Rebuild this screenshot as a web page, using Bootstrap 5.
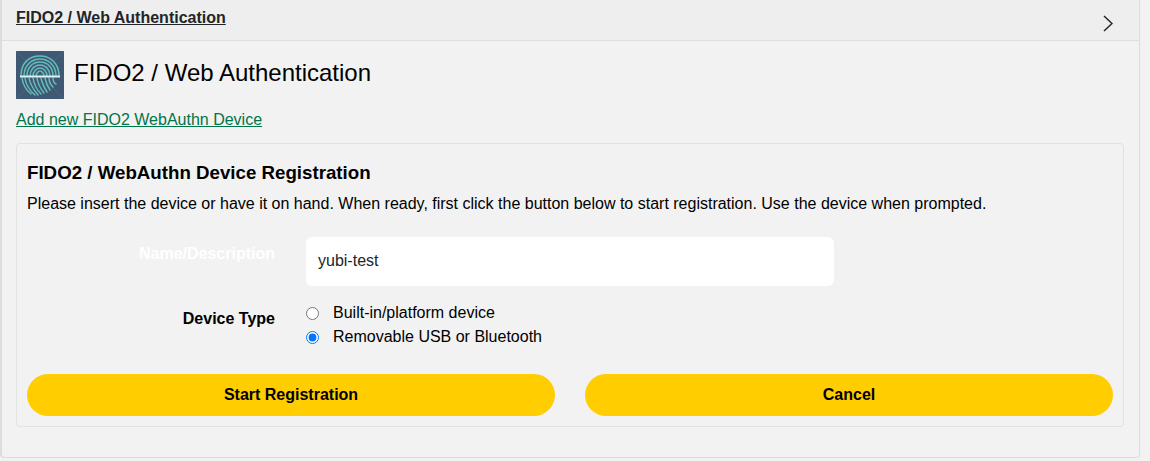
<!DOCTYPE html>
<html lang="en">
<head>
<meta charset="utf-8">
<title>FIDO2 / Web Authentication</title>
<link href="https://cdn.jsdelivr.net/npm/bootstrap@5.3.0/dist/css/bootstrap.min.css" rel="stylesheet">
<style>
html,body{height:461px;overflow:hidden}
body{background:#f2f2f2;color:#000;font-family:"Liberation Sans",Arial,sans-serif;font-size:16px}
.fido-panel{width:1140px;height:458px;margin-top:0;background:#f2f2f2;border:1px solid #dcdcdc;border-top:0;border-left-width:2px;border-radius:0 0 4px 4px;--bs-card-bg:#f2f2f2}
.fido-head{height:41px;background:#eee;border-bottom:1px solid #dedede;padding:0 14px;border-radius:0}
.fido-head a{color:#212529;font-weight:700;font-size:16px;line-height:18px;margin-top:9px}
.fido-head svg{margin:15px 12px 0 0}
.fido-body{padding:10px 14px 0}
.fido-logo{width:48px;height:48px;flex:none}
.fido-title{font-size:24px;line-height:28px;font-weight:400;margin:-4px 0 0 10px}
.fido-add{color:#00754a;font-size:16px;line-height:18px;display:inline-block;margin-top:12px}
.fido-inner{margin-top:11px;width:1108px;height:284px;background:#f2f2f2;border:1px solid #e2e2e2;border-radius:4px;padding:18px 10px 0;--bs-card-bg:#f2f2f2}
.fido-h{font-size:18.72px;line-height:21px;font-weight:700;margin:0}
.fido-p{font-size:16px;line-height:18px;margin:12px 0 0}
.fido-name{margin-top:24px}
.fido-label{width:248px;text-align:right;font-weight:700;font-size:16px;line-height:18px;flex:none}
.fido-white{color:#fff;padding-top:8px}
.fido-input{width:528px;height:49px;margin-left:31px;border:0;border-radius:6px;background:#fff;font-size:16px;padding:0 12px 2px;color:#212529}
.fido-type{margin-top:15px}
.fido-type .fido-label{padding-top:9px}
.fido-radios{margin-left:31px}
.fido-check{display:flex;align-items:center;height:24px;margin:0;padding:0;min-height:0}
.fido-check .form-check-input{appearance:auto;-webkit-appearance:auto;width:13px;height:13px;margin:0;float:none;border:0;background:none;flex:none;accent-color:#0075ff}
.fido-check label{margin-left:14px;line-height:18px}
.fido-actions{margin-top:25px;gap:30px}
.fido-btn{width:528px;height:42px;background:#ffcd00;border:0;border-radius:21px;color:#000;font-weight:700;font-size:16px;padding:0}
.fido-btn:hover{background:#ffcd00;color:#000}
</style>
</head>
<body>
<div class="card fido-panel">
  <div class="fido-head d-flex justify-content-between">
    <a href="#">FIDO2 / Web Authentication</a>
    <svg width="10" height="17" viewBox="0 0 10 17" fill="none" stroke="#212529" stroke-width="1.5"><path d="M1 1l8 7.5L1 16"/></svg>
  </div>
  <div class="fido-body">
    <div class="d-flex align-items-center">
      <svg class="fido-logo" viewBox="0 0 48 48" role="img" aria-label="Fingerprint">
        <rect width="48" height="48" fill="#3f5873"/>
        <path d="M0 0l48 48M48 0L0 48" stroke="#4d6780" stroke-width=".8"/>
        <g fill="none" stroke="#63bdb9" stroke-width="1.5" stroke-linecap="round">
          <path d="M5 25c0-13 8-20 19-20s19 8 19 20"/>
          <path d="M8 25c0-10 7-17 16-17s16 7 16 17"/>
          <path d="M11 25c0-8 5-14 13-14s13 6 13 14"/>
          <path d="M14 25c0-6 4-11 10-11s10 5 10 11"/>
          <path d="M17 25c0-4 3-8 7-8s7 4 7 8"/>
          <path d="M20 25c0-2 2-5 4-5s4 3 4 5"/>
          <path d="M6 27c1 7 4 12 9 16"/>
          <path d="M9 27c1 7 4 12 10 17"/>
          <path d="M13 27c1 6 4 11 9 17"/>
          <path d="M17 27c1 6 3 11 8 16"/>
          <path d="M21 27c1 6 3 10 7 15"/>
          <path d="M25 27c1 5 3 9 6 14"/>
          <path d="M29 27c1 5 2 8 5 12"/>
          <path d="M33 27c0 4 2 7 4 9"/>
          <path d="M37 27c0 3 1 5 3 6"/>
        </g>
        <path d="M4 25.5h40" stroke="#dff2ef" stroke-width="1.8"/>
      </svg>
      <h1 class="fido-title">FIDO2 / Web Authentication</h1>
    </div>
    <a class="fido-add" href="#">Add new FIDO2 WebAuthn Device</a>
    <div class="card fido-inner">
      <h2 class="fido-h">FIDO2 / WebAuthn Device Registration</h2>
      <p class="fido-p">Please insert the device or have it on hand. When ready, first click the button below to start registration. Use the device when prompted.</p>
      <div class="d-flex fido-name">
        <label class="fido-label fido-white" for="fido-desc">Name/Description</label>
        <input class="form-control fido-input" id="fido-desc" type="text" value="yubi-test">
      </div>
      <div class="d-flex fido-type">
        <div class="fido-label">Device Type</div>
        <div class="fido-radios">
          <div class="form-check fido-check"><input class="form-check-input" type="radio" name="fido-t" id="fido-a"><label for="fido-a">Built-in/platform device</label></div>
          <div class="form-check fido-check"><input class="form-check-input" type="radio" name="fido-t" id="fido-b" checked><label for="fido-b">Removable USB or Bluetooth</label></div>
        </div>
      </div>
      <div class="d-flex fido-actions">
        <button class="btn fido-btn" type="button">Start Registration</button>
        <button class="btn fido-btn" type="button">Cancel</button>
      </div>
    </div>
  </div>
</div>
<script src="https://cdn.jsdelivr.net/npm/bootstrap@5.3.0/dist/js/bootstrap.bundle.min.js"></script>
</body>
</html>
